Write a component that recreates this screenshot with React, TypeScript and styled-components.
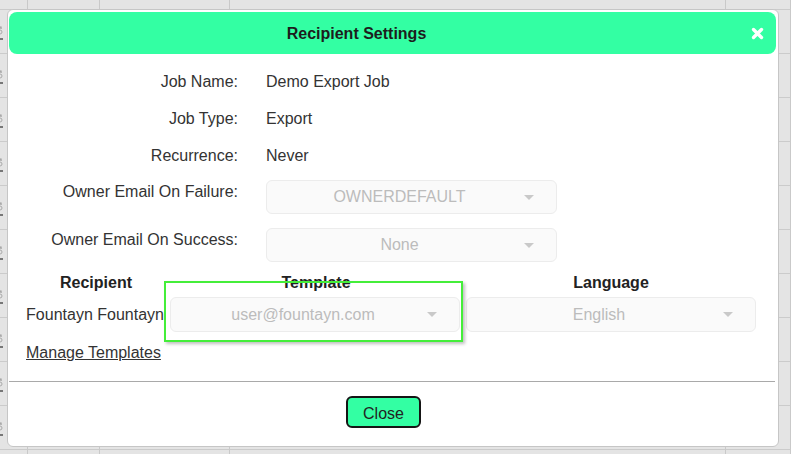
import React from 'react';
import styled, { createGlobalStyle } from 'styled-components';

const GREEN = '#33ffa3';

const GlobalStyle = createGlobalStyle`
  html, body {
    margin: 0;
    padding: 0;
    width: 791px;
    height: 454px;
    overflow: hidden;
    background: #e4e4e4;
    font-family: "Liberation Sans", Arial, sans-serif;
  }
`;

const Caret = () => (
  <svg width="10" height="6" viewBox="0 0 10 6">
    <path d="M0 0 L10 0 L5 5 Z" fill="#c9c9c9" />
  </svg>
);

const CloseX = () => (
  <svg width="13" height="13" viewBox="0 0 13 13">
    <path d="M2.5 2.5 L10.5 10.5 M10.5 2.5 L2.5 10.5" stroke="#fff" strokeWidth="3.4" strokeLinecap="round" />
  </svg>
);

const RowGlyph = () => (
  <svg width="12" height="20" viewBox="0 0 12 20">
    <path d="M1 3 h3 v2 h3 v2" stroke="#9a9a9a" strokeWidth="1.2" fill="none" />
    <circle cx="6" cy="10" r="2" fill="none" stroke="#aaa" strokeWidth="1" />
    <path d="M1 15 h4 v2 h4" stroke="#777" strokeWidth="2" fill="none" />
  </svg>
);

const Select: React.FC<{ value: string; width: number }> = ({ value, width }) => (
  <SelectBox style={{ width }}>
    <span>{value}</span>
    <CaretSlot>
      <Caret />
    </CaretSlot>
  </SelectBox>
);

const rows = Array.from({ length: 12 });
const cols = [0, 1, 2, 3, 4];

const App: React.FC = () => (
  <>
    <GlobalStyle />
    <Backdrop>
      {rows.map((_, r) =>
        cols.map((c) => (
          <Cell key={`${r}-${c}`}>
            {c === 0 && r > 0 && <RowGlyph />}
          </Cell>
        ))
      )}
    </Backdrop>

    <Dialog>
      <Header>
        <Title>Recipient Settings</Title>
        <CloseIcon>
          <CloseX />
        </CloseIcon>
      </Header>

      <Fields>
        <Label>Job Name:</Label>
        <Value>Demo Export Job</Value>
        <Label>Job Type:</Label>
        <Value>Export</Value>
        <Label>Recurrence:</Label>
        <Value>Never</Value>
        <Label $select>Owner Email On Failure:</Label>
        <SelectCell>
          <Select value="OWNERDEFAULT" width={291} />
        </SelectCell>
        <Label $select>Owner Email On Success:</Label>
        <SelectCell>
          <Select value="None" width={291} />
        </SelectCell>
      </Fields>

      <Table>
        <HeadCell>Recipient</HeadCell>
        <HeadCell>Template</HeadCell>
        <HeadCell>Language</HeadCell>
        <NameCell>Fountayn Fountayn</NameCell>
        <TableSelect>
          <Select value="user@fountayn.com" width={290} />
        </TableSelect>
        <TableSelect>
          <Select value="English" width={290} />
        </TableSelect>
        <Highlight />
      </Table>

      <ManageLink>Manage Templates</ManageLink>
      <Divider />

      <Footer>
        <CloseButton>Close</CloseButton>
      </Footer>
    </Dialog>
  </>
);

const Backdrop = styled.div`
  display: grid;
  grid-template-columns: 28px 72px 130px 496px 65px;
  grid-template-rows: 10px repeat(11, 44px);
  width: 791px;
  height: 454px;
  overflow: hidden;
`;

const Cell = styled.div`
  border-right: 1px solid #c9c9c9;
  border-bottom: 1px solid #cbcbcb;
  overflow: hidden;

  > svg {
    margin: 12px 0 0 -6px;
  }
`;

const Dialog = styled.div`
  position: absolute;
  left: 7px;
  top: 9px;
  width: 772px;
  height: 438px;
  box-sizing: border-box;
  background: #fff;
  border: 1px solid #c6c6c6;
  border-radius: 6px;
  color: #333;
  font-size: 16px;
`;

const Header = styled.div`
  display: flex;
  align-items: center;
  height: 42px;
  margin: 2px 2px 0 1px;
  padding-right: 72px;
  background: ${GREEN};
  border-radius: 8px;
  position: relative;
`;

const Title = styled.div`
  flex: 1;
  text-align: center;
  font-weight: bold;
  font-size: 16px;
  padding-top: 2px;
  color: #1d1d1d;
`;

const CloseIcon = styled.div`
  position: absolute;
  right: 12px;
  top: 15px;
  display: flex;
`;

const Fields = styled.div`
  display: grid;
  grid-template-columns: 230px 1fr;
  column-gap: 28px;
  padding-top: 9px;
`;

const Label = styled.div<{ $select?: boolean }>`
  text-align: right;
  line-height: 18px;
  height: ${(p) => (p.$select ? '48px' : '37px')};
  box-sizing: border-box;
  padding-top: ${(p) => (p.$select ? '9px' : '9.5px')};
`;

const Value = styled.div`
  line-height: 18px;
  height: 37px;
  box-sizing: border-box;
  padding-top: 9.5px;
`;

const SelectCell = styled.div`
  height: 48px;
  padding-top: 6px;
  box-sizing: border-box;
`;

const SelectBox = styled.div`
  position: relative;
  height: 34px;
  box-sizing: border-box;
  display: flex;
  align-items: center;
  justify-content: center;
  padding-right: 24px;
  background: #fafafa;
  border: 1px solid #ececec;
  border-radius: 6px;
  color: #bcbcbc;
  font-size: 16px;
`;

const CaretSlot = styled.span`
  position: absolute;
  right: 22px;
  top: 14px;
  display: flex;
`;

const Table = styled.div`
  position: relative;
  display: grid;
  grid-template-columns: 144px 296px 294px;
  margin: 4px 0 0 16px;
  width: 734px;
`;

const HeadCell = styled.div`
  text-align: center;
  font-weight: bold;
  line-height: 18px;
  color: #222;
`;

const NameCell = styled.div`
  margin-top: 5px;
  height: 35px;
  line-height: 35px;
  text-align: center;
  white-space: nowrap;
  overflow: hidden;
  padding-right: 2px;
  color: #333;
`;

const TableSelect = styled.div`
  margin-top: 5px;
  padding-left: 2px;

  > div {
    height: 35px;
  }
`;

const Highlight = styled.div`
  position: absolute;
  left: 140px;
  top: 7px;
  width: 299px;
  height: 61px;
  box-sizing: border-box;
  border: 2px solid #44ee3a;
  box-shadow: 2px 2px 3px rgba(0, 0, 0, 0.25);
  pointer-events: none;
`;

const ManageLink = styled.a`
  display: inline-block;
  margin: 12px 0 0 18px;
  line-height: 18px;
  color: #333;
  text-decoration: underline;
`;

const Divider = styled.div`
  height: 1px;
  background: #a9a9a9;
  margin: 19px 3px 0 1px;
`;

const Footer = styled.div`
  display: flex;
  justify-content: center;
  padding: 14px 19px 0 0;
`;

const CloseButton = styled.button`
  width: 75px;
  height: 32px;
  background: ${GREEN};
  border: 2px solid #151515;
  border-radius: 6px;
  font-family: "Liberation Sans", Arial, sans-serif;
  font-size: 16px;
  line-height: 30px;
  padding: 1px 0 0;
  color: #222;
`;

export default App;
